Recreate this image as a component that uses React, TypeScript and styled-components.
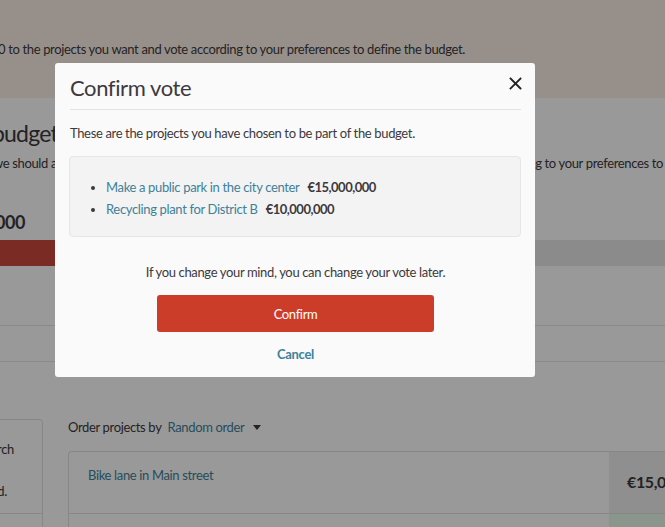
import * as React from 'react';
import styled, { createGlobalStyle } from 'styled-components';

const GlobalStyle = createGlobalStyle`
  html, body {
    margin: 0;
    padding: 0;
    background: #ffffff;
  }
  body {
    font-family: Lato, 'Noto Sans', sans-serif;
    color: #3d393c;
    font-size: 13px;
    letter-spacing: -0.35px;
  }
  * {
    box-sizing: border-box;
  }
`;

const Screen = styled.div`
  position: relative;
  width: 665px;
  height: 527px;
  overflow: hidden;
  background: #ffffff;
`;

/* ---------- page behind the modal ---------- */

const TopBand = styled.div`
  height: 98px;
  background: #fcf1e6;
  padding-top: 39px;
  margin-left: -2px;
  line-height: 20px;
  white-space: nowrap;
`;

const Main = styled.div`
  padding-top: 19px;
`;

const BudgetTitle = styled.h2`
  margin: 0 0 0 -8px;
  font-size: 23px;
  font-weight: 400;
  letter-spacing: -0.8px;
  line-height: 32px;
  white-space: nowrap;
`;

const BudgetText = styled.p`
  margin: 4px 0 0 -7px;
  line-height: 20px;
  white-space: nowrap;
`;

const Amount = styled.div`
  margin: 37px 0 0 -5px;
  font-size: 18px;
  font-weight: 700;
  letter-spacing: -0.5px;
  line-height: 24px;
`;

const Progress = styled.div`
  display: flex;
  height: 26px;
  margin-top: 6px;
  background: #e8e8e8;
`;

const ProgressFill = styled.div`
  background: #cb483c;
`;

const TabBar = styled.div`
  height: 37px;
  margin-top: 59px;
  border-top: 1px solid #e6e6e6;
  border-bottom: 1px solid #e6e6e6;
`;

const Columns = styled.div`
  display: flex;
  gap: 25px;
  margin-top: 57px;
`;

const Sidebar = styled.div`
  width: 43px;
  flex-shrink: 0;
`;

const SideCard = styled.div`
  border: 1px solid #e2e2e2;
  border-left: none;
  border-radius: 0 4px 0 0;
  height: 120px;
  overflow: hidden;
`;

const SideLine = styled.div<{ $top: number; $end: number }>`
  display: flex;
  justify-content: flex-end;
  margin-top: ${(p) => p.$top}px;
  padding-right: ${(p) => 42 - p.$end}px;
  line-height: 20px;
  white-space: nowrap;
`;

const SideDivider = styled.div`
  margin-top: 12px;
  border-top: 1px solid #e2e2e2;
`;

const Content = styled.div`
  flex: 1;
`;

const OrderRow = styled.div`
  display: flex;
  align-items: center;
  gap: 6px;
  line-height: 20px;
  margin-top: -2px;
`;

const OrderLink = styled.span`
  display: inline-flex;
  align-items: center;
  gap: 9px;
  color: #3f8198;
`;

const ProjectCard = styled.div`
  margin-top: 14px;
  border: 1px solid #e2e2e2;
  border-right: none;
  border-radius: 4px 0 0 0;
  display: flex;
`;

const ProjectMain = styled.div`
  flex: 1;
  display: flex;
  flex-direction: column;
`;

const ProjectTitle = styled.div`
  height: 62px;
  padding: 13px 0 0 19px;
  color: #3f8198;
  line-height: 20px;
  border-bottom: 1px solid #e2e2e2;
`;

const ProjectFoot = styled.div`
  height: 30px;
`;

const ProjectSide = styled.div`
  width: 56px;
  display: flex;
  flex-direction: column;
`;

const ProjectPrice = styled.div`
  height: 62px;
  background: #eeeeee;
  padding: 20px 0 0 18px;
  font-size: 16px;
  font-weight: 700;
  letter-spacing: -0.4px;
  white-space: nowrap;
  overflow: hidden;
  border-bottom: 1px solid #e2e2e2;
`;

const ProjectAdded = styled.div`
  flex: 1;
  background: #e6f8e9;
`;

/* ---------- modal ---------- */

const Overlay = styled.div`
  position: absolute;
  inset: 0;
  background: rgba(0, 0, 0, 0.4);
  padding: 63px 0 0 55px;
`;

const Modal = styled.div`
  width: 480px;
  background: #fafafa;
  border-radius: 3px;
  padding: 9px 14px 13px 15px;
`;

const ModalHeader = styled.div`
  display: flex;
  justify-content: space-between;
  align-items: flex-start;
  padding-bottom: 6px;
  border-bottom: 1px solid #e3e3e3;
`;

const ModalTitle = styled.h3`
  margin: 0;
  font-size: 22px;
  font-weight: 400;
  letter-spacing: -0.4px;
  line-height: 31px;
  color: #3d393c;
`;

const CloseButton = styled.button`
  border: none;
  background: none;
  padding: 0;
  margin: 5px -1px 0 0;
  width: 13px;
  height: 13px;
  display: flex;
  cursor: pointer;
`;

const Intro = styled.p`
  margin: 13px 0 0 0;
  line-height: 20px;
`;

const ChosenBox = styled.div`
  margin-top: 13px;
  margin-left: -1px;
  background: #f3f3f3;
  border: 1px solid #e6e6e6;
  border-radius: 4px;
  padding: 19px 0 16px 0;
`;

const ChosenList = styled.ul`
  margin: 0;
  padding-left: 36px;
`;

const ChosenItem = styled.li`
  line-height: 22px;
`;

const ProjectLink = styled.a`
  color: #3f8198;
  text-decoration: none;
  margin-right: 8px;
`;

const Price = styled.strong`
  font-weight: 700;
  letter-spacing: -0.5px;
  color: #3d393c;
`;

const Note = styled.p`
  margin: 25px 0 0 0;
  text-align: center;
  line-height: 20px;
`;

const Actions = styled.div`
  display: flex;
  flex-direction: column;
  align-items: center;
  margin-top: 13px;
`;

const ConfirmButton = styled.button`
  width: 277px;
  height: 37px;
  border: none;
  border-radius: 3px;
  background: #cc3d29;
  color: #ffffff;
  font-family: inherit;
  font-size: 13px;
  letter-spacing: -0.35px;
  cursor: pointer;
`;

const CancelButton = styled.button`
  margin-top: 12px;
  border: none;
  background: none;
  padding: 0;
  color: #3f8198;
  font-family: inherit;
  font-size: 13px;
  letter-spacing: -0.35px;
  font-weight: 700;
  line-height: 20px;
  cursor: pointer;
`;

const chosen = [
  { title: 'Make a public park in the city center', amount: '€15,000,000' },
  { title: 'Recycling plant for District B', amount: '€10,000,000' },
];

const App: React.FC = () => {
  return (
    <Screen>
      <GlobalStyle />
      <TopBand>
        0 to the projects you want and vote according to your preferences to define the budget.
      </TopBand>
      <Main>
        <BudgetTitle>budget</BudgetTitle>
        <BudgetText>
          we should allocate budget to? Assign at least €15,000,000 to the projects you want and
          vote according to your preferences to define the budget.
        </BudgetText>
        <Amount>000</Amount>
        <Progress>
          <ProgressFill style={{ width: `${(25 / 31.05) * 100}%` }} />
        </Progress>
        <TabBar />
        <Columns>
          <Sidebar>
            <SideCard>
              <SideLine $top={19} $end={14}>
                <span>Search</span>
              </SideLine>
              <SideLine $top={22} $end={7}>
                <span>Filtered.</span>
              </SideLine>
              <SideDivider />
            </SideCard>
          </Sidebar>
          <Content>
            <OrderRow>
              Order projects by
              <OrderLink>
                Random order
                <svg width="8" height="5" viewBox="0 0 8 5">
                  <path d="M0 0h8L4 5z" fill="#3d393c" />
                </svg>
              </OrderLink>
            </OrderRow>
            <ProjectCard>
              <ProjectMain>
                <ProjectTitle>Bike lane in Main street</ProjectTitle>
                <ProjectFoot />
              </ProjectMain>
              <ProjectSide>
                <ProjectPrice>€15,000,000</ProjectPrice>
                <ProjectAdded />
              </ProjectSide>
            </ProjectCard>
          </Content>
        </Columns>
      </Main>

      <Overlay>
        <Modal role="dialog" aria-labelledby="confirm-title">
          <ModalHeader>
            <ModalTitle id="confirm-title">Confirm vote</ModalTitle>
            <CloseButton aria-label="Close">
              <svg width="13" height="13" viewBox="0 0 13 13">
                <path
                  d="M1.5 1.5l10 10M11.5 1.5l-10 10"
                  stroke="#222"
                  strokeWidth="1.8"
                  strokeLinecap="square"
                />
              </svg>
            </CloseButton>
          </ModalHeader>
          <Intro>These are the projects you have chosen to be part of the budget.</Intro>
          <ChosenBox>
            <ChosenList>
              {chosen.map((p) => (
                <ChosenItem key={p.title}>
                  <ProjectLink href="#">{p.title}</ProjectLink>
                  <Price>{p.amount}</Price>
                </ChosenItem>
              ))}
            </ChosenList>
          </ChosenBox>
          <Note>If you change your mind, you can change your vote later.</Note>
          <Actions>
            <ConfirmButton>Confirm</ConfirmButton>
            <CancelButton>Cancel</CancelButton>
          </Actions>
        </Modal>
      </Overlay>
    </Screen>
  );
};

export default App;
